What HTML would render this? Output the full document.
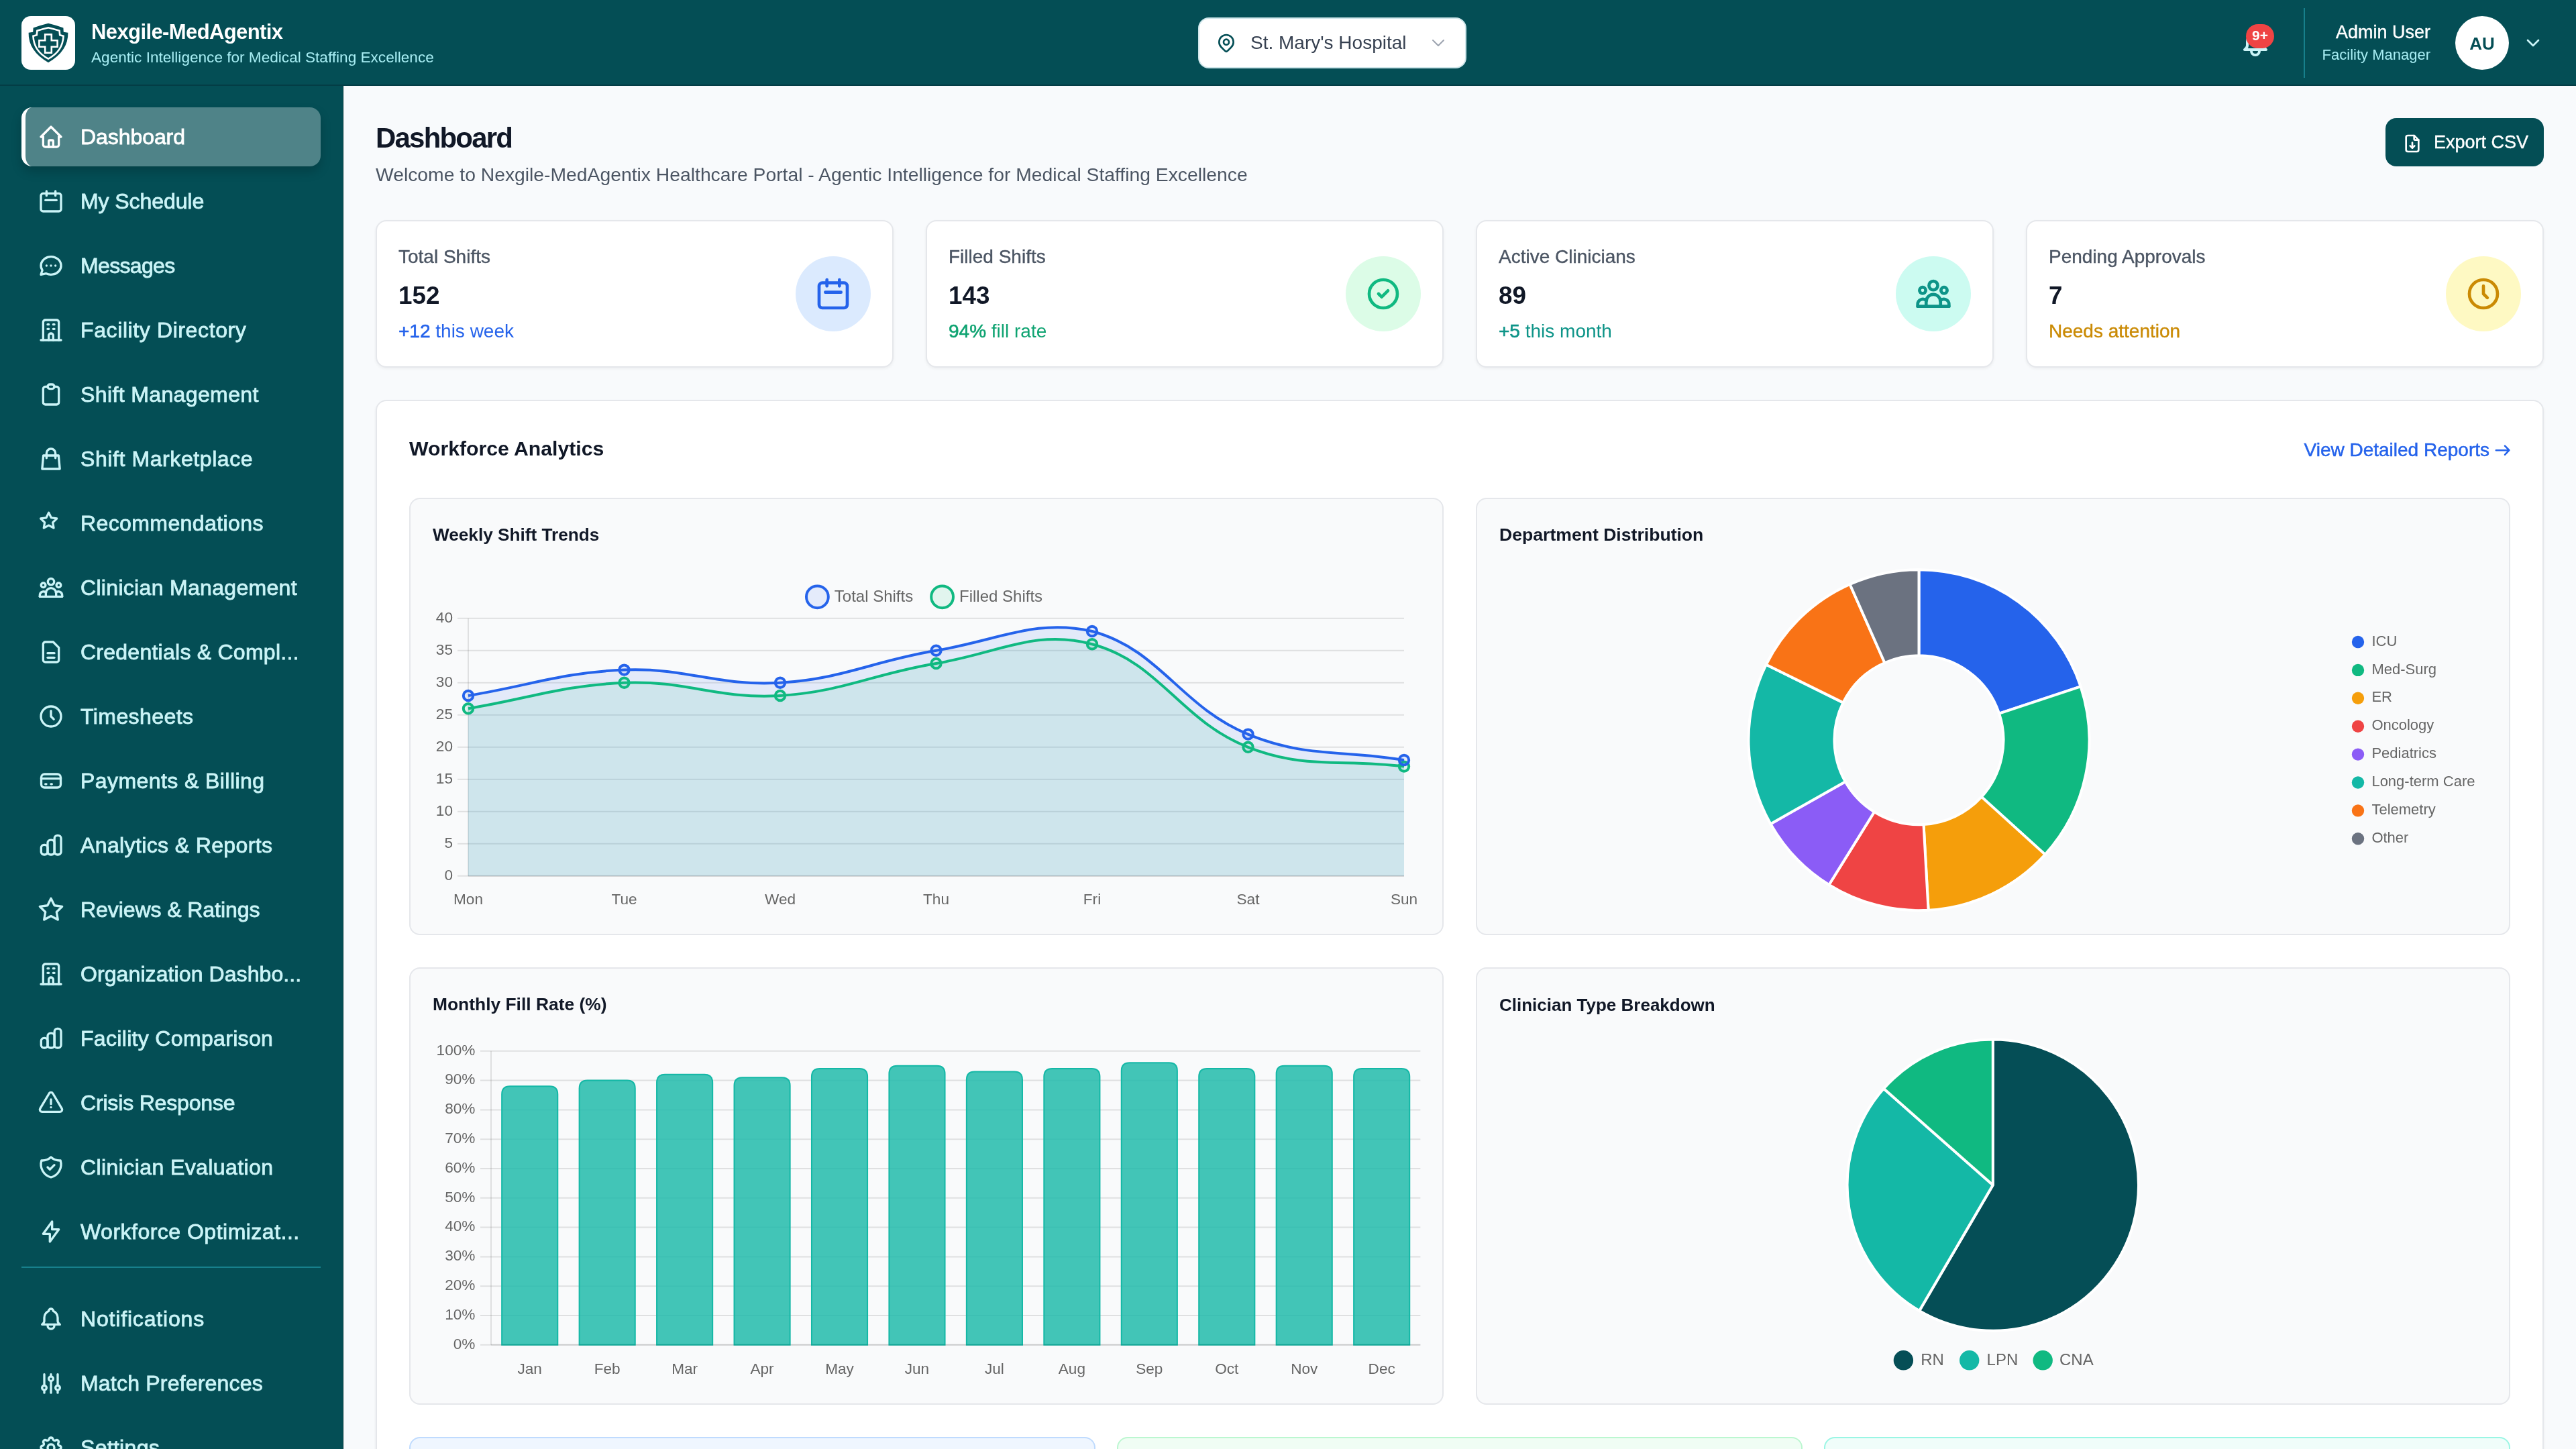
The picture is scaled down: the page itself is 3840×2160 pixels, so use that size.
<!DOCTYPE html><html><head><meta charset="utf-8"><style>
html,body{margin:0;padding:0;background:#f8fafc;overflow:hidden;}
#root{zoom:2;position:relative;width:1920px;height:1080px;overflow:hidden;background:#f8fafc;font-family:"Liberation Sans", sans-serif;}
.t{position:absolute;white-space:nowrap;font-family:"Liberation Sans", sans-serif;will-change:transform;}
.ic{position:absolute;overflow:visible;}
.box{position:absolute;box-sizing:border-box;}
@media (max-width:2400px){#root{zoom:1;}}
</style></head><body><div id="root">
<div class="box" style="left:0;top:0;width:1920px;height:64px;background:#044e55;border-bottom:1px solid #033d45;"></div>
<div class="box" style="left:16px;top:12px;width:40px;height:40px;background:#fff;border-radius:7px;"></div>
<svg class="ic" style="left:16px;top:12px;width:40px;height:40px" viewBox="0 0 40 40">
<path d="M20 5.4 Q25.6 6.8 31.2 8.7 L31.4 11.9 L34.7 12.4 Q35 26 20 34.6 Q5 26 5.3 12.4 L8.6 11.9 L8.8 8.7 Q14.4 6.8 20 5.4 Z" fill="#044e55"/>
<path d="M20 8.6 Q24.2 9.6 28.3 10.9 L28.6 14.1 L31.3 14.9 Q30.7 26.3 20 31.8 Q9.3 26.3 8.7 14.9 L11.4 14.1 L11.7 10.9 Q15.8 9.6 20 8.6 Z" fill="none" stroke="#fff" stroke-width="1.3"/>
<path d="M17.6 13.7h4.8v4.4h4.4v4.8h-4.4v4.4h-4.8v-4.4h-4.4v-4.8h4.4z" fill="none" stroke="#fff" stroke-width="1.3"/>
</svg>
<div class="t" style="left:68.00px;top:15.88px;font-size:15.5px;line-height:15.5px;color:#ffffff;font-weight:bold;letter-spacing:-0.3px;">Nexgile-MedAgentix</div>
<div class="t" style="left:68.00px;top:37.73px;font-size:11.3px;line-height:11.3px;color:#a8eef4;font-weight:normal;">Agentic Intelligence for Medical Staffing Excellence</div>
<div class="box" style="left:893px;top:13px;width:200px;height:38px;background:#fff;border-radius:8px;border:1px solid #cfe6ea;"></div>
<svg class="ic" style="left:906px;top:24px;width:16px;height:16px;" viewBox="0 0 24 24" fill="none" stroke="#044e55" stroke-width="2" stroke-linecap="round" stroke-linejoin="round"><path d="M9 11a3 3 0 1 0 6 0a3 3 0 0 0-6 0"/><path d="M17.657 16.657l-4.243 4.243a2 2 0 0 1-2.827 0l-4.244-4.243a8 8 0 1 1 11.314 0z"/></svg>
<div class="t" style="left:932.00px;top:25.15px;font-size:14px;line-height:14px;color:#374151;font-weight:normal;">St. Mary's Hospital</div>
<svg class="ic" style="left:1064px;top:24px;width:16px;height:16px;" viewBox="0 0 24 24" fill="none" stroke="#9ca3af" stroke-width="1.5" stroke-linecap="round" stroke-linejoin="round"><path d="M6 9l6 6 6-6"/></svg>
<svg class="ic" style="left:1669px;top:20px;width:24px;height:24px;" viewBox="0 0 24 24" fill="none" stroke="#cbf4f7" stroke-width="2" stroke-linecap="round" stroke-linejoin="round"><path d="M10 5a2 2 0 1 1 4 0a7 7 0 0 1 4 6v3a4 4 0 0 0 2 3H4a4 4 0 0 0 2-3v-3a7 7 0 0 1 4-6"/><path d="M9 17v1a3 3 0 0 0 6 0v-1"/></svg>
<div class="box" style="left:1674px;top:18px;width:21px;height:18px;background:#ef4444;border-radius:9px;"></div>
<div class="t" style="left:1684.60px;transform:translateX(-50%);top:21.11px;font-size:10.5px;line-height:10.5px;color:#fff;font-weight:bold;">9+</div>
<div class="box" style="left:1717px;top:6px;width:1px;height:52px;background:#17808c;"></div>
<div class="t" style="left:1811.50px;transform:translateX(-100%);top:17.47px;font-size:13.5px;line-height:13.5px;color:#ffffff;font-weight:normal;-webkit-text-stroke:0.2px #fff;">Admin User</div>
<div class="t" style="left:1811.50px;transform:translateX(-100%);top:35.54px;font-size:11px;line-height:11px;color:#a8eef4;font-weight:normal;">Facility Manager</div>
<div class="box" style="left:1830px;top:12px;width:40px;height:40px;background:#fff;border-radius:20px;"></div>
<div class="t" style="left:1850.00px;transform:translateX(-50%);top:26.00px;font-size:13px;line-height:13px;color:#044e55;font-weight:bold;">AU</div>
<svg class="ic" style="left:1880px;top:24px;width:16px;height:16px;" viewBox="0 0 24 24" fill="none" stroke="#cbf4f7" stroke-width="2" stroke-linecap="round" stroke-linejoin="round"><path d="M6 9l6 6 6-6"/></svg>
<div class="box" style="left:0;top:64px;width:256px;height:1016px;background:#044e55;"></div>
<div class="box" style="left:255.5px;top:64px;width:0.5px;height:1016px;background:#02363b;"></div>
<div class="box" style="left:16px;top:80px;width:223px;height:44px;background:rgba(255,255,255,0.3);border-radius:8px;border-left:3px solid #fff;box-shadow:0 4px 8px rgba(0,0,0,0.18);"></div>
<svg class="ic" style="left:28px;top:92px;width:20px;height:20px;" viewBox="0 0 24 24" fill="none" stroke="#ffffff" stroke-width="2" stroke-linecap="round" stroke-linejoin="round"><path d="M5 12H3l9-9 9 9h-2"/><path d="M5 12v7a2 2 0 0 0 2 2h10a2 2 0 0 0 2-2v-7"/><path d="M10 21v-5a1 1 0 0 1 1-1h2a1 1 0 0 1 1 1v5"/></svg>
<div class="t" style="left:60.00px;top:93.76px;font-size:16px;line-height:16px;color:#ffffff;font-weight:normal;letter-spacing:-0.035px;-webkit-text-stroke:0.4px #ffffff;">Dashboard</div>
<svg class="ic" style="left:28px;top:140px;width:20px;height:20px;" viewBox="0 0 24 24" fill="none" stroke="#cbf4f7" stroke-width="2" stroke-linecap="round" stroke-linejoin="round"><path d="M3 7a2 2 0 0 1 2-2h14a2 2 0 0 1 2 2v12a2 2 0 0 1-2 2H5a2 2 0 0 1-2-2z"/><path d="M8 3v4"/><path d="M16 3v4"/><path d="M7 11h10"/></svg>
<div class="t" style="left:60.00px;top:141.76px;font-size:16px;line-height:16px;color:#cbf4f7;font-weight:normal;letter-spacing:-0.04px;-webkit-text-stroke:0.4px #cbf4f7;">My Schedule</div>
<svg class="ic" style="left:28px;top:188px;width:20px;height:20px;" viewBox="0 0 24 24" fill="none" stroke="#cbf4f7" stroke-width="2" stroke-linecap="round" stroke-linejoin="round"><path d="M3 20l1.3-3.9c-2.324-3.437-1.426-7.872 2.1-10.374c3.526-2.501 8.59-2.296 11.845.48c3.255 2.777 3.695 7.266 1.029 10.501c-2.666 3.235-7.615 4.215-11.574 2.293L3 20"/><path d="M8 12h.01"/><path d="M12 12h.01"/><path d="M16 12h.01"/></svg>
<div class="t" style="left:60.00px;top:189.76px;font-size:16px;line-height:16px;color:#cbf4f7;font-weight:normal;letter-spacing:-0.332px;-webkit-text-stroke:0.4px #cbf4f7;">Messages</div>
<svg class="ic" style="left:28px;top:236px;width:20px;height:20px;" viewBox="0 0 24 24" fill="none" stroke="#cbf4f7" stroke-width="2" stroke-linecap="round" stroke-linejoin="round"><path d="M3 21h18"/><path d="M5 21V5a2 2 0 0 1 2-2h10a2 2 0 0 1 2 2v16"/><path d="M9 7h1"/><path d="M14 7h1"/><path d="M9 11h1"/><path d="M14 11h1"/><path d="M10 21v-4a2 2 0 0 1 4 0v4"/></svg>
<div class="t" style="left:60.00px;top:237.76px;font-size:16px;line-height:16px;color:#cbf4f7;font-weight:normal;letter-spacing:0.304px;-webkit-text-stroke:0.4px #cbf4f7;">Facility Directory</div>
<svg class="ic" style="left:28px;top:284px;width:20px;height:20px;" viewBox="0 0 24 24" fill="none" stroke="#cbf4f7" stroke-width="2" stroke-linecap="round" stroke-linejoin="round"><path d="M9 5H7a2 2 0 0 0-2 2v12a2 2 0 0 0 2 2h10a2 2 0 0 0 2-2V7a2 2 0 0 0-2-2h-2"/><path d="M9 5a2 2 0 0 1 2-2h2a2 2 0 0 1 2 2a2 2 0 0 1-2 2h-2a2 2 0 0 1-2-2z"/></svg>
<div class="t" style="left:60.00px;top:285.76px;font-size:16px;line-height:16px;color:#cbf4f7;font-weight:normal;letter-spacing:0.189px;-webkit-text-stroke:0.4px #cbf4f7;">Shift Management</div>
<svg class="ic" style="left:28px;top:332px;width:20px;height:20px;" viewBox="0 0 24 24" fill="none" stroke="#cbf4f7" stroke-width="2" stroke-linecap="round" stroke-linejoin="round"><path d="M5.2 9h13.6l1.1 12H4.1z"/><path d="M8 11.3V7a4 4 0 0 1 8 0v4.3"/></svg>
<div class="t" style="left:60.00px;top:333.76px;font-size:16px;line-height:16px;color:#cbf4f7;font-weight:normal;letter-spacing:0.293px;-webkit-text-stroke:0.4px #cbf4f7;">Shift Marketplace</div>
<svg class="ic" style="left:28px;top:380px;width:20px;height:20px;" viewBox="0 0 24 24" fill="none" stroke="#cbf4f7" stroke-width="2" stroke-linecap="round" stroke-linejoin="round"><g transform="translate(1.36 1.12) scale(0.72)" stroke-width="2.7"><path d="M12 17.75l-6.172 3.245 1.179-6.873-5-4.867 6.9-1L12 2l3.086 6.253 6.9 1-5 4.867 1.179 6.873z"/></g></svg>
<div class="t" style="left:60.00px;top:381.76px;font-size:16px;line-height:16px;color:#cbf4f7;font-weight:normal;letter-spacing:0.2px;-webkit-text-stroke:0.4px #cbf4f7;">Recommendations</div>
<svg class="ic" style="left:28px;top:428px;width:20px;height:20px;" viewBox="0 0 24 24" fill="none" stroke="#cbf4f7" stroke-width="2" stroke-linecap="round" stroke-linejoin="round"><path d="M9.2 6.7a2.8 2.8 0 1 0 5.6 0a2.8 2.8 0 0 0-5.6 0"/><path d="M3.15 9.8a2 2 0 1 0 4 0a2 2 0 0 0-4 0"/><path d="M16.85 9.8a2 2 0 1 0 4 0a2 2 0 0 0-4 0"/><path d="M2 20h20"/><path d="M7.4 20v-3a4.6 4.6 0 0 1 9.2 0v3"/><path d="M2 20v-1.2a3.3 3.3 0 0 1 5.6-2.4"/><path d="M22 20v-1.2a3.3 3.3 0 0 0-5.6-2.4"/></svg>
<div class="t" style="left:60.00px;top:429.76px;font-size:16px;line-height:16px;color:#cbf4f7;font-weight:normal;letter-spacing:0.157px;-webkit-text-stroke:0.4px #cbf4f7;">Clinician Management</div>
<svg class="ic" style="left:28px;top:476px;width:20px;height:20px;" viewBox="0 0 24 24" fill="none" stroke="#cbf4f7" stroke-width="2" stroke-linecap="round" stroke-linejoin="round"><path d="M5 5a2 2 0 0 1 2-2h7l5 5v11a2 2 0 0 1-2 2H7a2 2 0 0 1-2-2z"/><path d="M9 13h6"/><path d="M9 17h6"/></svg>
<div class="t" style="left:60.00px;top:477.76px;font-size:16px;line-height:16px;color:#cbf4f7;font-weight:normal;letter-spacing:0.126px;-webkit-text-stroke:0.4px #cbf4f7;">Credentials &amp; Compl...</div>
<svg class="ic" style="left:28px;top:524px;width:20px;height:20px;" viewBox="0 0 24 24" fill="none" stroke="#cbf4f7" stroke-width="2" stroke-linecap="round" stroke-linejoin="round"><path d="M3 12a9 9 0 1 0 18 0a9 9 0 0 0-18 0"/><path d="M12 7v5l2.5 2.5"/></svg>
<div class="t" style="left:60.00px;top:525.76px;font-size:16px;line-height:16px;color:#cbf4f7;font-weight:normal;letter-spacing:0.21px;-webkit-text-stroke:0.4px #cbf4f7;">Timesheets</div>
<svg class="ic" style="left:28px;top:572px;width:20px;height:20px;" viewBox="0 0 24 24" fill="none" stroke="#cbf4f7" stroke-width="2" stroke-linecap="round" stroke-linejoin="round"><path d="M3.3 9a3 3 0 0 1 3-3h11.4a3 3 0 0 1 3 3v6a3 3 0 0 1-3 3H6.3a3 3 0 0 1-3-3z"/><path d="M3.3 10h17.4"/><path d="M7 14.9h.8"/><path d="M12 14.9h.8"/></svg>
<div class="t" style="left:60.00px;top:573.76px;font-size:16px;line-height:16px;color:#cbf4f7;font-weight:normal;letter-spacing:0.212px;-webkit-text-stroke:0.4px #cbf4f7;">Payments &amp; Billing</div>
<svg class="ic" style="left:28px;top:620px;width:20px;height:20px;" viewBox="0 0 24 24" fill="none" stroke="#cbf4f7" stroke-width="2" stroke-linecap="round" stroke-linejoin="round"><g><rect x="3.2" y="11.6" width="5.8" height="8.8" rx="2.6"/><rect x="9" y="7.3" width="6.1" height="13.1" rx="2.6"/><rect x="15.1" y="3.2" width="5.9" height="17.2" rx="2.6"/></g></svg>
<div class="t" style="left:60.00px;top:621.76px;font-size:16px;line-height:16px;color:#cbf4f7;font-weight:normal;letter-spacing:0.188px;-webkit-text-stroke:0.4px #cbf4f7;">Analytics &amp; Reports</div>
<svg class="ic" style="left:28px;top:668px;width:20px;height:20px;" viewBox="0 0 24 24" fill="none" stroke="#cbf4f7" stroke-width="2" stroke-linecap="round" stroke-linejoin="round"><path d="M12 17.75l-6.172 3.245 1.179-6.873-5-4.867 6.9-1L12 2l3.086 6.253 6.9 1-5 4.867 1.179 6.873z"/></svg>
<div class="t" style="left:60.00px;top:669.76px;font-size:16px;line-height:16px;color:#cbf4f7;font-weight:normal;letter-spacing:-0.036px;-webkit-text-stroke:0.4px #cbf4f7;">Reviews &amp; Ratings</div>
<svg class="ic" style="left:28px;top:716px;width:20px;height:20px;" viewBox="0 0 24 24" fill="none" stroke="#cbf4f7" stroke-width="2" stroke-linecap="round" stroke-linejoin="round"><path d="M3 21h18"/><path d="M5 21V5a2 2 0 0 1 2-2h10a2 2 0 0 1 2 2v16"/><path d="M9 7h1"/><path d="M14 7h1"/><path d="M9 11h1"/><path d="M14 11h1"/><path d="M10 21v-4a2 2 0 0 1 4 0v4"/></svg>
<div class="t" style="left:60.00px;top:717.76px;font-size:16px;line-height:16px;color:#cbf4f7;font-weight:normal;letter-spacing:0.045px;-webkit-text-stroke:0.4px #cbf4f7;">Organization Dashbo...</div>
<svg class="ic" style="left:28px;top:764px;width:20px;height:20px;" viewBox="0 0 24 24" fill="none" stroke="#cbf4f7" stroke-width="2" stroke-linecap="round" stroke-linejoin="round"><g><rect x="3.2" y="11.6" width="5.8" height="8.8" rx="2.6"/><rect x="9" y="7.3" width="6.1" height="13.1" rx="2.6"/><rect x="15.1" y="3.2" width="5.9" height="17.2" rx="2.6"/></g></svg>
<div class="t" style="left:60.00px;top:765.76px;font-size:16px;line-height:16px;color:#cbf4f7;font-weight:normal;letter-spacing:0.162px;-webkit-text-stroke:0.4px #cbf4f7;">Facility Comparison</div>
<svg class="ic" style="left:28px;top:812px;width:20px;height:20px;" viewBox="0 0 24 24" fill="none" stroke="#cbf4f7" stroke-width="2" stroke-linecap="round" stroke-linejoin="round"><path d="M12 9v4"/><path d="M10.363 3.591L2.257 17.125a1.914 1.914 0 0 0 1.636 2.871h16.214a1.914 1.914 0 0 0 1.636-2.87L13.637 3.59a1.914 1.914 0 0 0-3.274 0z"/><path d="M12 16h.01"/></svg>
<div class="t" style="left:60.00px;top:813.76px;font-size:16px;line-height:16px;color:#cbf4f7;font-weight:normal;letter-spacing:-0.085px;-webkit-text-stroke:0.4px #cbf4f7;">Crisis Response</div>
<svg class="ic" style="left:28px;top:860px;width:20px;height:20px;" viewBox="0 0 24 24" fill="none" stroke="#cbf4f7" stroke-width="2" stroke-linecap="round" stroke-linejoin="round"><path d="M12 3a12 12 0 0 0 8.5 3a12 12 0 0 1-8.5 15a12 12 0 0 1-8.5-15a12 12 0 0 0 8.5-3"/><path d="M9 12l2 2 4-4"/></svg>
<div class="t" style="left:60.00px;top:861.76px;font-size:16px;line-height:16px;color:#cbf4f7;font-weight:normal;letter-spacing:0.203px;-webkit-text-stroke:0.4px #cbf4f7;">Clinician Evaluation</div>
<svg class="ic" style="left:28px;top:908px;width:20px;height:20px;" viewBox="0 0 24 24" fill="none" stroke="#cbf4f7" stroke-width="2" stroke-linecap="round" stroke-linejoin="round"><path d="M13 3v7h6l-8 11v-7H5l8-11"/></svg>
<div class="t" style="left:60.00px;top:909.76px;font-size:16px;line-height:16px;color:#cbf4f7;font-weight:normal;letter-spacing:0.244px;-webkit-text-stroke:0.4px #cbf4f7;">Workforce Optimizat...</div>
<div class="box" style="left:16px;top:944px;width:223px;height:1px;background:#17808c;"></div>
<svg class="ic" style="left:28px;top:973px;width:20px;height:20px;" viewBox="0 0 24 24" fill="none" stroke="#cbf4f7" stroke-width="2" stroke-linecap="round" stroke-linejoin="round"><path d="M10 5a2 2 0 1 1 4 0a7 7 0 0 1 4 6v3a4 4 0 0 0 2 3H4a4 4 0 0 0 2-3v-3a7 7 0 0 1 4-6"/><path d="M9 17v1a3 3 0 0 0 6 0v-1"/></svg>
<div class="t" style="left:60.00px;top:974.76px;font-size:16px;line-height:16px;color:#cbf4f7;font-weight:normal;letter-spacing:0.412px;-webkit-text-stroke:0.4px #cbf4f7;">Notifications</div>
<svg class="ic" style="left:28px;top:1021px;width:20px;height:20px;" viewBox="0 0 24 24" fill="none" stroke="#cbf4f7" stroke-width="2" stroke-linecap="round" stroke-linejoin="round"><path d="M6 4v10"/><path d="M6 18.2v2.3"/><path d="M12 4v1.8"/><path d="M12 10.1v10.4"/><path d="M18 4v10"/><path d="M18 18.2v2.3"/><path d="M4 16.1a2 2 0 1 0 4 0a2 2 0 0 0-4 0"/><path d="M10 7.95a2 2 0 1 0 4 0a2 2 0 0 0-4 0"/><path d="M16 16.1a2 2 0 1 0 4 0a2 2 0 0 0-4 0"/></svg>
<div class="t" style="left:60.00px;top:1022.76px;font-size:16px;line-height:16px;color:#cbf4f7;font-weight:normal;letter-spacing:0.101px;-webkit-text-stroke:0.4px #cbf4f7;">Match Preferences</div>
<svg class="ic" style="left:28px;top:1069px;width:20px;height:20px;" viewBox="0 0 24 24" fill="none" stroke="#cbf4f7" stroke-width="2" stroke-linecap="round" stroke-linejoin="round"><path d="M10.325 4.317c.426-1.756 2.924-1.756 3.35 0a1.724 1.724 0 0 0 2.573 1.066c1.543-.94 3.31.826 2.37 2.37a1.724 1.724 0 0 0 1.065 2.572c1.756.426 1.756 2.924 0 3.35a1.724 1.724 0 0 0-1.066 2.573c.94 1.543-.826 3.31-2.37 2.37a1.724 1.724 0 0 0-2.572 1.065c-.426 1.756-2.924 1.756-3.35 0a1.724 1.724 0 0 0-2.573-1.066c-1.543.94-3.31-.826-2.37-2.37a1.724 1.724 0 0 0-1.065-2.572c-1.756-.426-1.756-2.924 0-3.35a1.724 1.724 0 0 0 1.066-2.573c-.94-1.543.826-3.31 2.37-2.37c1 .608 2.296.07 2.572-1.065z"/><path d="M9 12a3 3 0 1 0 6 0a3 3 0 0 0-6 0"/></svg>
<div class="t" style="left:60.00px;top:1070.76px;font-size:16px;line-height:16px;color:#cbf4f7;font-weight:normal;letter-spacing:0.15px;-webkit-text-stroke:0.4px #cbf4f7;">Settings</div>
<div class="t" style="left:280.00px;top:92.47px;font-size:21px;line-height:21px;color:#111827;font-weight:bold;letter-spacing:-0.9px;">Dashboard</div>
<div class="t" style="left:280.00px;top:123.02px;font-size:14.15px;line-height:14.15px;color:#4b5563;font-weight:normal;">Welcome to Nexgile-MedAgentix Healthcare Portal - Agentic Intelligence for Medical Staffing Excellence</div>
<div class="box" style="left:1778px;top:88px;width:118px;height:36px;background:#044e55;border-radius:8px;"></div>
<svg class="ic" style="left:1790px;top:99px;width:16px;height:16px;" viewBox="0 0 24 24" fill="none" stroke="#fff" stroke-width="2" stroke-linecap="round" stroke-linejoin="round"><path d="M14 3v4a1 1 0 0 0 1 1h4"/><path d="M17 21H7a2 2 0 0 1-2-2V5a2 2 0 0 1 2-2h7l5 5v11a2 2 0 0 1-2 2z"/><path d="M12 11v6"/><path d="M9.5 14.5L12 17l2.5-2.5"/></svg>
<div class="t" style="left:1814.00px;top:99.57px;font-size:13.5px;line-height:13.5px;color:#fff;font-weight:normal;-webkit-text-stroke:0.2px #fff;">Export CSV</div>
<div class="box" style="left:280px;top:164px;width:386px;height:110px;background:#fff;border:1px solid #e5e7eb;border-radius:8px;box-shadow:0 1px 2px rgba(0,0,0,0.05);"></div>
<div class="t" style="left:297.00px;top:184.25px;font-size:14px;line-height:14px;color:#4b5563;font-weight:normal;-webkit-text-stroke:0.2px #4b5563;">Total Shifts</div>
<div class="t" style="left:297.00px;top:211.62px;font-size:18.4px;line-height:18.4px;color:#111827;font-weight:bold;">152</div>
<div class="t" style="left:297.00px;top:240.15px;font-size:14px;line-height:14px;color:#2563eb;font-weight:normal;"><span style="-webkit-text-stroke:0.3px #2563eb">+12</span> this week</div>
<div class="box" style="left:593px;top:191px;width:56px;height:56px;background:#dbeafe;border-radius:28px;"></div>
<svg class="ic" style="left:607px;top:205px;width:28px;height:28px;" viewBox="0 0 24 24" fill="none" stroke="#2563eb" stroke-width="2" stroke-linecap="round" stroke-linejoin="round"><path d="M3 7a2 2 0 0 1 2-2h14a2 2 0 0 1 2 2v12a2 2 0 0 1-2 2H5a2 2 0 0 1-2-2z"/><path d="M8 3v4"/><path d="M16 3v4"/><path d="M7 11h10"/></svg>
<div class="box" style="left:690px;top:164px;width:386px;height:110px;background:#fff;border:1px solid #e5e7eb;border-radius:8px;box-shadow:0 1px 2px rgba(0,0,0,0.05);"></div>
<div class="t" style="left:707.00px;top:184.25px;font-size:14px;line-height:14px;color:#4b5563;font-weight:normal;-webkit-text-stroke:0.2px #4b5563;">Filled Shifts</div>
<div class="t" style="left:707.00px;top:211.62px;font-size:18.4px;line-height:18.4px;color:#111827;font-weight:bold;">143</div>
<div class="t" style="left:707.00px;top:240.15px;font-size:14px;line-height:14px;color:#0ea371;font-weight:normal;"><span style="-webkit-text-stroke:0.3px #0ea371">94%</span> fill rate</div>
<div class="box" style="left:1003px;top:191px;width:56px;height:56px;background:#dcfce7;border-radius:28px;"></div>
<svg class="ic" style="left:1017px;top:205px;width:28px;height:28px;" viewBox="0 0 24 24" fill="none" stroke="#10b981" stroke-width="2" stroke-linecap="round" stroke-linejoin="round"><path d="M3 12a9 9 0 1 0 18 0a9 9 0 1 0-18 0"/><path d="M9 12l2 2 4-4"/></svg>
<div class="box" style="left:1100px;top:164px;width:386px;height:110px;background:#fff;border:1px solid #e5e7eb;border-radius:8px;box-shadow:0 1px 2px rgba(0,0,0,0.05);"></div>
<div class="t" style="left:1117.00px;top:184.25px;font-size:14px;line-height:14px;color:#4b5563;font-weight:normal;-webkit-text-stroke:0.2px #4b5563;">Active Clinicians</div>
<div class="t" style="left:1117.00px;top:211.62px;font-size:18.4px;line-height:18.4px;color:#111827;font-weight:bold;">89</div>
<div class="t" style="left:1117.00px;top:240.15px;font-size:14px;line-height:14px;color:#0d9488;font-weight:normal;"><span style="-webkit-text-stroke:0.3px #0d9488">+5</span> this month</div>
<div class="box" style="left:1413px;top:191px;width:56px;height:56px;background:#ccfbf1;border-radius:28px;"></div>
<svg class="ic" style="left:1427px;top:205px;width:28px;height:28px;" viewBox="0 0 24 24" fill="none" stroke="#0d9488" stroke-width="2" stroke-linecap="round" stroke-linejoin="round"><path d="M9.2 6.7a2.8 2.8 0 1 0 5.6 0a2.8 2.8 0 0 0-5.6 0"/><path d="M3.15 9.8a2 2 0 1 0 4 0a2 2 0 0 0-4 0"/><path d="M16.85 9.8a2 2 0 1 0 4 0a2 2 0 0 0-4 0"/><path d="M2 20h20"/><path d="M7.4 20v-3a4.6 4.6 0 0 1 9.2 0v3"/><path d="M2 20v-1.2a3.3 3.3 0 0 1 5.6-2.4"/><path d="M22 20v-1.2a3.3 3.3 0 0 0-5.6-2.4"/></svg>
<div class="box" style="left:1510px;top:164px;width:386px;height:110px;background:#fff;border:1px solid #e5e7eb;border-radius:8px;box-shadow:0 1px 2px rgba(0,0,0,0.05);"></div>
<div class="t" style="left:1527.00px;top:184.25px;font-size:14px;line-height:14px;color:#4b5563;font-weight:normal;-webkit-text-stroke:0.2px #4b5563;">Pending Approvals</div>
<div class="t" style="left:1527.00px;top:211.62px;font-size:18.4px;line-height:18.4px;color:#111827;font-weight:bold;">7</div>
<div class="t" style="left:1527.00px;top:240.15px;font-size:14px;line-height:14px;color:#ca8a04;font-weight:normal;-webkit-text-stroke:0.2px #ca8a04;">Needs attention</div>
<div class="box" style="left:1823px;top:191px;width:56px;height:56px;background:#fef9c3;border-radius:28px;"></div>
<svg class="ic" style="left:1837px;top:205px;width:28px;height:28px;" viewBox="0 0 24 24" fill="none" stroke="#ca8a04" stroke-width="2" stroke-linecap="round" stroke-linejoin="round"><path d="M3 12a9 9 0 1 0 18 0a9 9 0 0 0-18 0"/><path d="M12 7v5l2.5 2.5"/></svg>
<div class="box" style="left:280px;top:298px;width:1616px;height:900px;background:#fff;border:1px solid #e5e7eb;border-radius:8px;box-shadow:0 1px 2px rgba(0,0,0,0.05);"></div>
<div class="t" style="left:305.00px;top:327.22px;font-size:15.1px;line-height:15.1px;color:#111827;font-weight:bold;">Workforce Analytics</div>
<div class="t" style="left:1855.50px;transform:translateX(-100%);top:328.25px;font-size:14px;line-height:14px;color:#2563eb;font-weight:normal;-webkit-text-stroke:0.25px #2563eb;">View Detailed Reports</div>
<svg class="ic" style="left:1858px;top:329px;width:14px;height:12px" viewBox="0 0 14 12" fill="none" stroke="#2563eb" stroke-width="1.3" stroke-linecap="round" stroke-linejoin="round"><path d="M2.4 6.6h9.4M9 3.3L12.2 6.6 9 9.9"/></svg>
<div class="box" style="left:305px;top:371px;width:771px;height:326px;background:#f9fafb;border:1px solid #e5e7eb;border-radius:8px;"></div>
<div class="t" style="left:322.40px;top:392.16px;font-size:13.1px;line-height:13.1px;color:#111827;font-weight:bold;">Weekly Shift Trends</div>
<div class="box" style="left:1100px;top:371px;width:771px;height:326px;background:#f9fafb;border:1px solid #e5e7eb;border-radius:8px;"></div>
<div class="t" style="left:1117.40px;top:391.99px;font-size:13.3px;line-height:13.3px;color:#111827;font-weight:bold;">Department Distribution</div>
<div class="box" style="left:305px;top:721px;width:771px;height:326px;background:#f9fafb;border:1px solid #e5e7eb;border-radius:8px;"></div>
<div class="t" style="left:322.40px;top:742.08px;font-size:13.2px;line-height:13.2px;color:#111827;font-weight:bold;">Monthly Fill Rate (%)</div>
<div class="box" style="left:1100px;top:721px;width:771px;height:326px;background:#f9fafb;border:1px solid #e5e7eb;border-radius:8px;"></div>
<div class="t" style="left:1117.40px;top:742.25px;font-size:13.0px;line-height:13.0px;color:#111827;font-weight:bold;">Clinician Type Breakdown</div>
<div class="box" style="left:305.00px;top:1071px;width:511.33px;height:120px;background:#eff6ff;border:1px solid #bfdbfe;border-radius:8px;"></div>
<div class="box" style="left:832.33px;top:1071px;width:511.33px;height:120px;background:#f0fdf4;border:1px solid #bbf7d0;border-radius:8px;"></div>
<div class="box" style="left:1359.66px;top:1071px;width:511.33px;height:120px;background:#f0fdfa;border:1px solid #99f6e4;border-radius:8px;"></div>
<svg style="position:absolute;left:0;top:0;width:1920px;height:1080px;overflow:visible" viewBox="0 0 1920 1080" font-family='"Liberation Sans", sans-serif'><line x1="341" y1="652.9" x2="1046.5" y2="652.9" stroke="rgba(0,0,0,0.1)" stroke-width="1"/><text x="337.5" y="655.80" text-anchor="end" font-size="11.3" fill="#666666">0</text><line x1="341" y1="628.9" x2="1046.5" y2="628.9" stroke="rgba(0,0,0,0.1)" stroke-width="1"/><text x="337.5" y="631.80" text-anchor="end" font-size="11.3" fill="#666666">5</text><line x1="341" y1="604.9" x2="1046.5" y2="604.9" stroke="rgba(0,0,0,0.1)" stroke-width="1"/><text x="337.5" y="607.80" text-anchor="end" font-size="11.3" fill="#666666">10</text><line x1="341" y1="580.9" x2="1046.5" y2="580.9" stroke="rgba(0,0,0,0.1)" stroke-width="1"/><text x="337.5" y="583.80" text-anchor="end" font-size="11.3" fill="#666666">15</text><line x1="341" y1="556.9" x2="1046.5" y2="556.9" stroke="rgba(0,0,0,0.1)" stroke-width="1"/><text x="337.5" y="559.80" text-anchor="end" font-size="11.3" fill="#666666">20</text><line x1="341" y1="532.9" x2="1046.5" y2="532.9" stroke="rgba(0,0,0,0.1)" stroke-width="1"/><text x="337.5" y="535.80" text-anchor="end" font-size="11.3" fill="#666666">25</text><line x1="341" y1="508.9" x2="1046.5" y2="508.9" stroke="rgba(0,0,0,0.1)" stroke-width="1"/><text x="337.5" y="511.80" text-anchor="end" font-size="11.3" fill="#666666">30</text><line x1="341" y1="484.9" x2="1046.5" y2="484.9" stroke="rgba(0,0,0,0.1)" stroke-width="1"/><text x="337.5" y="487.80" text-anchor="end" font-size="11.3" fill="#666666">35</text><line x1="341" y1="460.9" x2="1046.5" y2="460.9" stroke="rgba(0,0,0,0.1)" stroke-width="1"/><text x="337.5" y="463.80" text-anchor="end" font-size="11.3" fill="#666666">40</text><line x1="349" y1="460.9" x2="349" y2="652.9" stroke="rgba(0,0,0,0.1)" stroke-width="1"/><text x="349.0" y="673.75" text-anchor="middle" font-size="11.3" fill="#666666">Mon</text><text x="465.25" y="673.75" text-anchor="middle" font-size="11.3" fill="#666666">Tue</text><text x="581.5" y="673.75" text-anchor="middle" font-size="11.3" fill="#666666">Wed</text><text x="697.75" y="673.75" text-anchor="middle" font-size="11.3" fill="#666666">Thu</text><text x="814.0" y="673.75" text-anchor="middle" font-size="11.3" fill="#666666">Fri</text><text x="930.25" y="673.75" text-anchor="middle" font-size="11.3" fill="#666666">Sat</text><text x="1046.5" y="673.75" text-anchor="middle" font-size="11.3" fill="#666666">Sun</text><path d="M349.00 518.50C395.50 510.82 418.52 501.23 465.25 499.30C511.52 497.39 535.41 511.75 581.50 508.90C628.41 505.99 650.94 492.63 697.75 484.90C743.94 477.27 771.52 460.90 814.00 470.50C864.52 484.06 879.86 526.49 930.25 547.30C972.86 564.89 1000.00 558.82 1046.50 566.50L1046.5 652.9L349.0 652.9Z" fill="rgba(37,99,235,0.1)"/><path d="M349.00 528.10C395.50 520.42 418.52 510.83 465.25 508.90C511.52 506.99 535.41 521.35 581.50 518.50C628.41 515.59 650.94 502.23 697.75 494.50C743.94 486.87 771.52 468.70 814.00 480.10C864.52 493.66 879.73 537.08 930.25 556.90C972.73 573.56 1000.00 565.54 1046.50 571.30L1046.5 652.9L349.0 652.9Z" fill="rgba(16,185,129,0.1)"/><line x1="349" y1="652.9" x2="1046.5" y2="652.9" stroke="rgba(0,0,0,0.1)" stroke-width="1"/><path d="M349.00 528.10C395.50 520.42 418.52 510.83 465.25 508.90C511.52 506.99 535.41 521.35 581.50 518.50C628.41 515.59 650.94 502.23 697.75 494.50C743.94 486.87 771.52 468.70 814.00 480.10C864.52 493.66 879.73 537.08 930.25 556.90C972.73 573.56 1000.00 565.54 1046.50 571.30" fill="none" stroke="#10b981" stroke-width="2"/><circle cx="349.0" cy="528.10" r="3.6" fill="rgba(16,185,129,0.1)" stroke="#10b981" stroke-width="2"/><circle cx="465.25" cy="508.90" r="3.6" fill="rgba(16,185,129,0.1)" stroke="#10b981" stroke-width="2"/><circle cx="581.5" cy="518.50" r="3.6" fill="rgba(16,185,129,0.1)" stroke="#10b981" stroke-width="2"/><circle cx="697.75" cy="494.50" r="3.6" fill="rgba(16,185,129,0.1)" stroke="#10b981" stroke-width="2"/><circle cx="814.0" cy="480.10" r="3.6" fill="rgba(16,185,129,0.1)" stroke="#10b981" stroke-width="2"/><circle cx="930.25" cy="556.90" r="3.6" fill="rgba(16,185,129,0.1)" stroke="#10b981" stroke-width="2"/><circle cx="1046.5" cy="571.30" r="3.6" fill="rgba(16,185,129,0.1)" stroke="#10b981" stroke-width="2"/><path d="M349.00 518.50C395.50 510.82 418.52 501.23 465.25 499.30C511.52 497.39 535.41 511.75 581.50 508.90C628.41 505.99 650.94 492.63 697.75 484.90C743.94 477.27 771.52 460.90 814.00 470.50C864.52 484.06 879.86 526.49 930.25 547.30C972.86 564.89 1000.00 558.82 1046.50 566.50" fill="none" stroke="#2563eb" stroke-width="2"/><circle cx="349.0" cy="518.50" r="3.6" fill="rgba(37,99,235,0.1)" stroke="#2563eb" stroke-width="2"/><circle cx="465.25" cy="499.30" r="3.6" fill="rgba(37,99,235,0.1)" stroke="#2563eb" stroke-width="2"/><circle cx="581.5" cy="508.90" r="3.6" fill="rgba(37,99,235,0.1)" stroke="#2563eb" stroke-width="2"/><circle cx="697.75" cy="484.90" r="3.6" fill="rgba(37,99,235,0.1)" stroke="#2563eb" stroke-width="2"/><circle cx="814.0" cy="470.50" r="3.6" fill="rgba(37,99,235,0.1)" stroke="#2563eb" stroke-width="2"/><circle cx="930.25" cy="547.30" r="3.6" fill="rgba(37,99,235,0.1)" stroke="#2563eb" stroke-width="2"/><circle cx="1046.5" cy="566.50" r="3.6" fill="rgba(37,99,235,0.1)" stroke="#2563eb" stroke-width="2"/><circle cx="609.2" cy="444.9" r="8.2" fill="#e4ebfb" stroke="#2563eb" stroke-width="2"/><text x="621.9" y="448.5" font-size="12" fill="#666666">Total Shifts</text><circle cx="702.3" cy="444.9" r="8.2" fill="#e1f5ee" stroke="#10b981" stroke-width="2"/><text x="715" y="448.5" font-size="12" fill="#666666">Filled Shifts</text><path d="M1430.25 424.60A127 127 0 0 1 1550.81 511.68L1490.06 531.80A63 63 0 0 0 1430.25 488.60Z" fill="#2563eb" stroke="#fff" stroke-width="2" stroke-linejoin="bevel"/><path d="M1550.81 511.68A127 127 0 0 1 1524.31 636.93L1476.91 593.93A63 63 0 0 0 1490.06 531.80Z" fill="#10b981" stroke="#fff" stroke-width="2" stroke-linejoin="bevel"/><path d="M1524.31 636.93A127 127 0 0 1 1437.31 678.40L1433.75 614.50A63 63 0 0 0 1476.91 593.93Z" fill="#f59e0b" stroke="#fff" stroke-width="2" stroke-linejoin="bevel"/><path d="M1437.31 678.40A127 127 0 0 1 1363.22 659.47L1397.00 605.11A63 63 0 0 0 1433.75 614.50Z" fill="#ef4444" stroke="#fff" stroke-width="2" stroke-linejoin="bevel"/><path d="M1363.22 659.47A127 127 0 0 1 1319.68 614.08L1375.40 582.59A63 63 0 0 0 1397.00 605.11Z" fill="#8b5cf6" stroke="#fff" stroke-width="2" stroke-linejoin="bevel"/><path d="M1319.68 614.08A127 127 0 0 1 1316.38 495.36L1373.76 523.70A63 63 0 0 0 1375.40 582.59Z" fill="#14b8a6" stroke="#fff" stroke-width="2" stroke-linejoin="bevel"/><path d="M1316.38 495.36A127 127 0 0 1 1378.81 435.48L1404.73 494.00A63 63 0 0 0 1373.76 523.70Z" fill="#f97316" stroke="#fff" stroke-width="2" stroke-linejoin="bevel"/><path d="M1378.81 435.48A127 127 0 0 1 1430.25 424.60L1430.25 488.60A63 63 0 0 0 1404.73 494.00Z" fill="#6b7280" stroke="#fff" stroke-width="2" stroke-linejoin="bevel"/><circle cx="1757.5" cy="478.50" r="4.6" fill="#2563eb"/><text x="1767.7" y="481.30" font-size="11" fill="#666666">ICU</text><circle cx="1757.5" cy="499.45" r="4.6" fill="#10b981"/><text x="1767.7" y="502.25" font-size="11" fill="#666666">Med-Surg</text><circle cx="1757.5" cy="520.40" r="4.6" fill="#f59e0b"/><text x="1767.7" y="523.20" font-size="11" fill="#666666">ER</text><circle cx="1757.5" cy="541.35" r="4.6" fill="#ef4444"/><text x="1767.7" y="544.15" font-size="11" fill="#666666">Oncology</text><circle cx="1757.5" cy="562.30" r="4.6" fill="#8b5cf6"/><text x="1767.7" y="565.10" font-size="11" fill="#666666">Pediatrics</text><circle cx="1757.5" cy="583.25" r="4.6" fill="#14b8a6"/><text x="1767.7" y="586.05" font-size="11" fill="#666666">Long-term Care</text><circle cx="1757.5" cy="604.20" r="4.6" fill="#f97316"/><text x="1767.7" y="607.00" font-size="11" fill="#666666">Telemetry</text><circle cx="1757.5" cy="625.15" r="4.6" fill="#6b7280"/><text x="1767.7" y="627.95" font-size="11" fill="#666666">Other</text><line x1="358" y1="1002.40" x2="1058.7" y2="1002.40" stroke="rgba(0,0,0,0.1)" stroke-width="1"/><text x="354.2" y="1005.30" text-anchor="end" font-size="11.3" fill="#666666">0%</text><line x1="358" y1="980.50" x2="1058.7" y2="980.50" stroke="rgba(0,0,0,0.1)" stroke-width="1"/><text x="354.2" y="983.40" text-anchor="end" font-size="11.3" fill="#666666">10%</text><line x1="358" y1="958.60" x2="1058.7" y2="958.60" stroke="rgba(0,0,0,0.1)" stroke-width="1"/><text x="354.2" y="961.50" text-anchor="end" font-size="11.3" fill="#666666">20%</text><line x1="358" y1="936.70" x2="1058.7" y2="936.70" stroke="rgba(0,0,0,0.1)" stroke-width="1"/><text x="354.2" y="939.60" text-anchor="end" font-size="11.3" fill="#666666">30%</text><line x1="358" y1="914.80" x2="1058.7" y2="914.80" stroke="rgba(0,0,0,0.1)" stroke-width="1"/><text x="354.2" y="917.70" text-anchor="end" font-size="11.3" fill="#666666">40%</text><line x1="358" y1="892.90" x2="1058.7" y2="892.90" stroke="rgba(0,0,0,0.1)" stroke-width="1"/><text x="354.2" y="895.80" text-anchor="end" font-size="11.3" fill="#666666">50%</text><line x1="358" y1="871.00" x2="1058.7" y2="871.00" stroke="rgba(0,0,0,0.1)" stroke-width="1"/><text x="354.2" y="873.90" text-anchor="end" font-size="11.3" fill="#666666">60%</text><line x1="358" y1="849.10" x2="1058.7" y2="849.10" stroke="rgba(0,0,0,0.1)" stroke-width="1"/><text x="354.2" y="852.00" text-anchor="end" font-size="11.3" fill="#666666">70%</text><line x1="358" y1="827.20" x2="1058.7" y2="827.20" stroke="rgba(0,0,0,0.1)" stroke-width="1"/><text x="354.2" y="830.10" text-anchor="end" font-size="11.3" fill="#666666">80%</text><line x1="358" y1="805.30" x2="1058.7" y2="805.30" stroke="rgba(0,0,0,0.1)" stroke-width="1"/><text x="354.2" y="808.20" text-anchor="end" font-size="11.3" fill="#666666">90%</text><line x1="358" y1="783.40" x2="1058.7" y2="783.40" stroke="rgba(0,0,0,0.1)" stroke-width="1"/><text x="354.2" y="786.30" text-anchor="end" font-size="11.3" fill="#666666">100%</text><line x1="366.0" y1="783.4" x2="366.0" y2="1002.4" stroke="rgba(0,0,0,0.1)" stroke-width="1"/><path d="M374.08 1002.4V815.68Q374.08 809.68 380.08 809.68H409.64Q415.64 809.68 415.64 815.68V1002.4Z" fill="rgba(20,184,166,0.8)" stroke="#14b8a6" stroke-width="1"/><text x="394.86" y="1024.05" text-anchor="middle" font-size="11.3" fill="#666666">Jan</text><path d="M431.81 1002.4V811.30Q431.81 805.30 437.81 805.30H467.37Q473.37 805.30 473.37 811.30V1002.4Z" fill="rgba(20,184,166,0.8)" stroke="#14b8a6" stroke-width="1"/><text x="452.59" y="1024.05" text-anchor="middle" font-size="11.3" fill="#666666">Feb</text><path d="M489.53 1002.4V806.92Q489.53 800.92 495.53 800.92H525.09Q531.09 800.92 531.09 806.92V1002.4Z" fill="rgba(20,184,166,0.8)" stroke="#14b8a6" stroke-width="1"/><text x="510.31" y="1024.05" text-anchor="middle" font-size="11.3" fill="#666666">Mar</text><path d="M547.26 1002.4V809.11Q547.26 803.11 553.26 803.11H582.82Q588.82 803.11 588.82 809.11V1002.4Z" fill="rgba(20,184,166,0.8)" stroke="#14b8a6" stroke-width="1"/><text x="568.04" y="1024.05" text-anchor="middle" font-size="11.3" fill="#666666">Apr</text><path d="M604.98 1002.4V802.54Q604.98 796.54 610.98 796.54H640.54Q646.54 796.54 646.54 802.54V1002.4Z" fill="rgba(20,184,166,0.8)" stroke="#14b8a6" stroke-width="1"/><text x="625.76" y="1024.05" text-anchor="middle" font-size="11.3" fill="#666666">May</text><path d="M662.71 1002.4V800.35Q662.71 794.35 668.71 794.35H698.27Q704.27 794.35 704.27 800.35V1002.4Z" fill="rgba(20,184,166,0.8)" stroke="#14b8a6" stroke-width="1"/><text x="683.49" y="1024.05" text-anchor="middle" font-size="11.3" fill="#666666">Jun</text><path d="M720.43 1002.4V804.73Q720.43 798.73 726.43 798.73H755.99Q761.99 798.73 761.99 804.73V1002.4Z" fill="rgba(20,184,166,0.8)" stroke="#14b8a6" stroke-width="1"/><text x="741.21" y="1024.05" text-anchor="middle" font-size="11.3" fill="#666666">Jul</text><path d="M778.16 1002.4V802.54Q778.16 796.54 784.16 796.54H813.72Q819.72 796.54 819.72 802.54V1002.4Z" fill="rgba(20,184,166,0.8)" stroke="#14b8a6" stroke-width="1"/><text x="798.94" y="1024.05" text-anchor="middle" font-size="11.3" fill="#666666">Aug</text><path d="M835.88 1002.4V798.16Q835.88 792.16 841.88 792.16H871.44Q877.44 792.16 877.44 798.16V1002.4Z" fill="rgba(20,184,166,0.8)" stroke="#14b8a6" stroke-width="1"/><text x="856.66" y="1024.05" text-anchor="middle" font-size="11.3" fill="#666666">Sep</text><path d="M893.61 1002.4V802.54Q893.61 796.54 899.61 796.54H929.17Q935.17 796.54 935.17 802.54V1002.4Z" fill="rgba(20,184,166,0.8)" stroke="#14b8a6" stroke-width="1"/><text x="914.39" y="1024.05" text-anchor="middle" font-size="11.3" fill="#666666">Oct</text><path d="M951.33 1002.4V800.35Q951.33 794.35 957.33 794.35H986.89Q992.89 794.35 992.89 800.35V1002.4Z" fill="rgba(20,184,166,0.8)" stroke="#14b8a6" stroke-width="1"/><text x="972.11" y="1024.05" text-anchor="middle" font-size="11.3" fill="#666666">Nov</text><path d="M1009.06 1002.4V802.54Q1009.06 796.54 1015.06 796.54H1044.62Q1050.62 796.54 1050.62 802.54V1002.4Z" fill="rgba(20,184,166,0.8)" stroke="#14b8a6" stroke-width="1"/><text x="1029.84" y="1024.05" text-anchor="middle" font-size="11.3" fill="#666666">Dec</text><line x1="366.0" y1="1002.4" x2="1058.7" y2="1002.4" stroke="rgba(0,0,0,0.1)" stroke-width="1"/><path d="M1485.4 883.3L1485.40 774.70A108.6 108.6 0 1 1 1430.55 977.03Z" fill="#054e56" stroke="#fff" stroke-width="2" stroke-linejoin="bevel"/><path d="M1485.4 883.3L1430.55 977.03A108.6 108.6 0 0 1 1404.01 811.40Z" fill="#14b8a6" stroke="#fff" stroke-width="2" stroke-linejoin="bevel"/><path d="M1485.4 883.3L1404.01 811.40A108.6 108.6 0 0 1 1485.40 774.70Z" fill="#10b981" stroke="#fff" stroke-width="2" stroke-linejoin="bevel"/><circle cx="1418.7" cy="1013.9" r="7.35" fill="#054e56"/><text x="1431.6" y="1017.45" font-size="12" fill="#666666">RN</text><circle cx="1467.85" cy="1013.9" r="7.35" fill="#14b8a6"/><text x="1480.8" y="1017.45" font-size="12" fill="#666666">LPN</text><circle cx="1522.6" cy="1013.9" r="7.35" fill="#10b981"/><text x="1535" y="1017.45" font-size="12" fill="#666666">CNA</text></svg>
</div></body></html>
